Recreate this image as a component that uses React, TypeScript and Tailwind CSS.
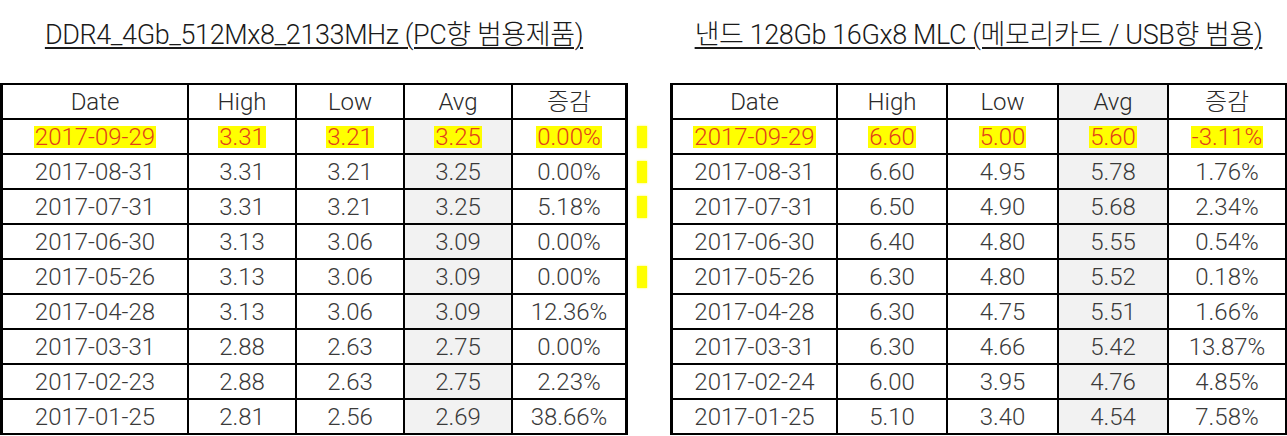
import React from 'react';

type Row = [string, string, string, string, string];

const ddrRows: Row[] = [
  ['2017-09-29', '3.31', '3.21', '3.25', '0.00%'],
  ['2017-08-31', '3.31', '3.21', '3.25', '0.00%'],
  ['2017-07-31', '3.31', '3.21', '3.25', '5.18%'],
  ['2017-06-30', '3.13', '3.06', '3.09', '0.00%'],
  ['2017-05-26', '3.13', '3.06', '3.09', '0.00%'],
  ['2017-04-28', '3.13', '3.06', '3.09', '12.36%'],
  ['2017-03-31', '2.88', '2.63', '2.75', '0.00%'],
  ['2017-02-23', '2.88', '2.63', '2.75', '2.23%'],
  ['2017-01-25', '2.81', '2.56', '2.69', '38.66%'],
];

const nandRows: Row[] = [
  ['2017-09-29', '6.60', '5.00', '5.60', '-3.11%'],
  ['2017-08-31', '6.60', '4.95', '5.78', '1.76%'],
  ['2017-07-31', '6.50', '4.90', '5.68', '2.34%'],
  ['2017-06-30', '6.40', '4.80', '5.55', '0.54%'],
  ['2017-05-26', '6.30', '4.80', '5.52', '0.18%'],
  ['2017-04-28', '6.30', '4.75', '5.51', '1.66%'],
  ['2017-03-31', '6.30', '4.66', '5.42', '13.87%'],
  ['2017-02-24', '6.00', '3.95', '4.76', '4.85%'],
  ['2017-01-25', '5.10', '3.40', '4.54', '7.58%'],
];

const headers = ['Date', 'High', 'Low', 'Avg', '증감'];

// rows that carry a yellow marker between the two tables
const marked = [true, true, true, false, true, false, false, false, false];

interface PriceTableProps {
  rows: Row[];
  cols: string;
  grayHeaderAvg?: boolean;
}

const PriceTable: React.FC<PriceTableProps> = ({ rows, cols, grayHeaderAvg }) => (
  <div className={`grid ${cols} auto-rows-[33px] gap-[2px] bg-black px-[3px] py-[2px]`}>
    {headers.map((h, i) => (
      <div
        key={h}
        className={`flex items-center justify-center text-[#2a2a2a] ${
          i === 3 && grayHeaderAvg ? 'bg-[#f2f2f2]' : 'bg-white'
        }`}
      >
        {h}
      </div>
    ))}
    {rows.map((row, r) =>
      row.map((cell, c) => (
        <div
          key={`${r}-${c}`}
          className={`flex items-center justify-center ${c === 3 ? 'bg-[#f2f2f2]' : 'bg-white'}`}
        >
          {r === 0 ? (
            <span className="inline-block h-[22px] leading-[22px] px-[1px] bg-[#ffff00] text-[#e2411a]">{cell}</span>
          ) : (
            cell
          )}
        </div>
      ))
    )}
  </div>
);

const Title: React.FC<{ children: React.ReactNode }> = ({ children }) => (
  <div className="h-[83px] pt-[18px] text-center">
    <span className="text-[27px] leading-[32px] tracking-[-0.4px] text-[#1a1a1a] underline decoration-[2px] underline-offset-[3px]">
      {children}
    </span>
  </div>
);

export default function App() {
  return (
    <div className="w-[1287px] h-[436px] overflow-hidden bg-white font-['Roboto','Noto_Sans_CJK_KR',sans-serif] font-light text-[24px] text-[#3a3a3a]">
      <div className="flex">
        <div className="w-[628px]">
          <Title>DDR4_4Gb_512Mx8_2133MHz (PC향 범용제품)</Title>
          <PriceTable rows={ddrRows} cols="grid-cols-[184px_106px_106px_106px_112px]" />
        </div>

        <div className="w-[42px] pt-[120px] pl-[9px] flex flex-col gap-[2px]">
          {marked.map((m, i) => (
            <div key={i} className="h-[33px] flex items-center">
              {m && <div className="w-[10px] h-[22px] bg-[#ffff00] shadow-[0_0_2px_#ffff40]" />}
            </div>
          ))}
        </div>

        <div className="w-[617px]">
          <Title>낸드 128Gb 16Gx8 MLC (메모리카드 / USB향 범용)</Title>
          <PriceTable rows={nandRows} cols="grid-cols-[163px_108px_109px_108px_116px]" grayHeaderAvg />
        </div>
      </div>
    </div>
  );
}
